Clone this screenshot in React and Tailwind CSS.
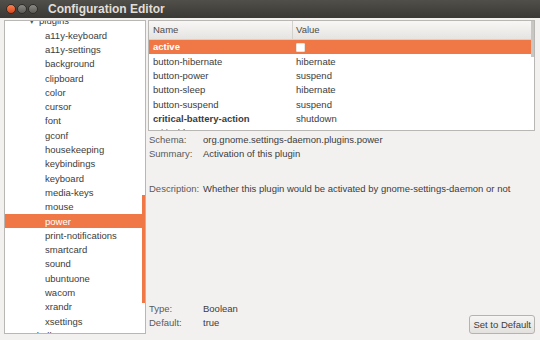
import React from 'react';

const plugins = [
  'a11y-keyboard', 'a11y-settings', 'background', 'clipboard', 'color', 'cursor',
  'font', 'gconf', 'housekeeping', 'keybindings', 'keyboard', 'media-keys', 'mouse',
  'power', 'print-notifications', 'smartcard', 'sound', 'ubuntuone', 'wacom',
  'xrandr', 'xsettings',
];

const keys = [
  { name: 'active', value: null, selected: true },
  { name: 'button-hibernate', value: 'hibernate' },
  { name: 'button-power', value: 'suspend' },
  { name: 'button-sleep', value: 'hibernate' },
  { name: 'button-suspend', value: 'suspend' },
  { name: 'critical-battery-action', value: 'shutdown', bold: true },
  { name: 'critical-battery-...', value: '' },
];

function TitleBar() {
  return (
    <div className="h-[18px] shrink-0 flex items-center bg-gradient-to-b from-[#504f4a] to-[#3a3935] px-[6px] gap-[1px]">
      <div className="w-[10px] h-[10px] rounded-full bg-gradient-to-b from-[#f7804f] to-[#d9461c] border border-[#3a2a22]" />
      <div className="w-[10px] h-[10px] rounded-full bg-gradient-to-b from-[#8b8a85] to-[#5c5b56] border border-[#2f2e2b]" />
      <div className="w-[10px] h-[10px] rounded-full bg-gradient-to-b from-[#8b8a85] to-[#5c5b56] border border-[#2f2e2b]" />
      <span className="ml-[9px] text-[12px] font-bold text-[#e2ded6] leading-none">Configuration Editor</span>
    </div>
  );
}

function Tree() {
  return (
    <div className="relative w-[142px] bg-white border border-[#b9b7b3] overflow-hidden">
      <div className="-mt-[7px]">
        <div className="h-[14.3px] flex items-center pl-[25px] gap-[5px]">
          <span className="text-[7px] text-[#555]">▾</span>
          <span>plugins</span>
        </div>
        {plugins.map((p) => (
          <div
            key={p}
            className={`h-[14.3px] flex items-center pl-[40px] ${
              p === 'power' ? 'bg-[#f07746] text-white mr-[3px]' : ''
            }`}
          >
            {p}
          </div>
        ))}
        <div className="h-[14.3px] flex items-center pl-[17px] gap-[5px]">
          <span className="text-[7px] text-[#555]">▶</span>
          <span>shell</span>
        </div>
      </div>
      <div className="absolute right-0 top-[174px] w-[3px] h-[108px] bg-[#f07746]" />
    </div>
  );
}

function KeyTable() {
  return (
    <div className="relative h-[111px] shrink-0 bg-white border border-[#b9b7b3] overflow-hidden">
      <div className="h-[19px] flex bg-gradient-to-b from-[#f8f7f6] to-[#e6e4e1] border-b border-[#d3d1cd] text-[#4c4c4c]">
        <div className="w-[144px] pl-[4px] flex items-center border-r border-[#d3d1cd]">Name</div>
        <div className="flex-1 pl-[3px] flex items-center">Value</div>
      </div>
      {keys.map((k) => (
        <div
          key={k.name}
          className={`h-[14.3px] flex items-center mr-[3px] ${k.selected ? 'bg-[#f07746] text-white font-bold' : ''}`}
        >
          <div className={`w-[144px] pl-[4px] ${k.bold ? 'font-bold' : ''}`}>{k.name}</div>
          <div className="flex-1 pl-[3px]">
            {k.value === null ? (
              <div className="w-[9px] h-[9px] bg-white border border-[#e8e4e0] rounded-[1px]" />
            ) : (
              k.value
            )}
          </div>
        </div>
      ))}
      <div className="absolute right-0 top-0 w-[3px] h-[36px] bg-[#c9c7c3]" />
    </div>
  );
}

function Field({ label, value }) {
  return (
    <div className="h-[14px] flex items-center">
      <span className="w-[55px] shrink-0 pl-[1px] text-[#5a5a5a]">{label}</span>
      <span className="whitespace-nowrap">{value}</span>
    </div>
  );
}

export default function App() {
  return (
    <div
      className="w-[540px] h-[340px] flex flex-col bg-[#f2f1f0] text-[9.5px] text-[#3c3c3c] leading-none overflow-hidden"
      style={{ fontFamily: '"Liberation Sans", Arial, sans-serif' }}
    >
      <TitleBar />
      <div className="flex-1 min-h-0 flex pl-[4px] pr-[5px] pt-[2px] pb-[6px] gap-[2px]">
        <Tree />
        <div className="flex-1 flex flex-col">
          <KeyTable />
          <div className="mt-[2px]">
            <Field label="Schema:" value="org.gnome.settings-daemon.plugins.power" />
            <Field label="Summary:" value="Activation of this plugin" />
            <div className="h-[21px]" />
            <Field label="Description:" value="Whether this plugin would be activated by gnome-settings-daemon or not" />
          </div>
          <div className="flex-1" />
          <div className="flex items-end">
            <div className="pb-[4px]">
              <Field label="Type:" value="Boolean" />
              <Field label="Default:" value="true" />
            </div>
            <div className="flex-1" />
            <button className="h-[19px] px-[3px] border border-[#b5b3ae] rounded-[3px] bg-gradient-to-b from-[#f6f5f4] to-[#e3e1de] text-[#3c3c3c]">
              Set to Default
            </button>
          </div>
        </div>
      </div>
    </div>
  );
}
